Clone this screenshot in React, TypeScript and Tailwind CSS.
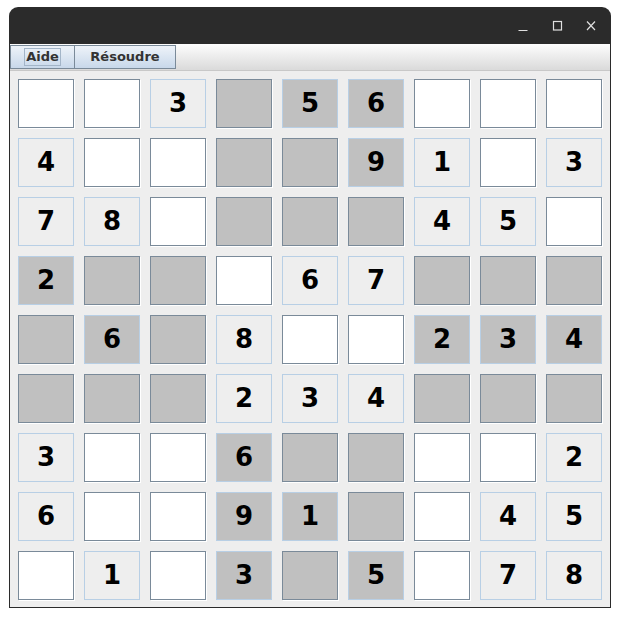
const grid: string[] = [
  "..3#56...",
  "4..##91.3",
  "78.###45.",
  "2##.67###",
  "#6#8..234",
  "###234###",
  "3..6##..2",
  "6..91#.45",
  ".1.3#5.78",
];

// boîtes grisées (damier 3x3)
const shaded = (r: number, c: number) => (Math.floor(r / 3) + Math.floor(c / 3)) % 2 === 1;

function Cell({ ch, dark }: { ch: string; dark: boolean }) {
  const digit = /[0-9]/.test(ch);
  if (!digit) {
    return (
      <div
        className={`border border-[#7a8a99] shadow-[1px_1px_0_#ffffff] ${
          dark ? "bg-[#c0c0c0]" : "bg-white"
        }`}
      />
    );
  }
  return (
    <div
      className={`flex items-center justify-center border border-[#b8cfe5] text-[26px] font-bold text-black ${
        dark ? "bg-[#c0c0c0]" : "bg-[#eeeeee]"
      }`}
    >
      {ch}
    </div>
  );
}

export default function App() {
  return (
    <div
      className="h-[618px] w-[620px] bg-white pl-[9px] pt-[7px]"
      style={{ fontFamily: '"DejaVu Sans", sans-serif' }}
    >
      <div className="flex h-[601px] w-[602px] flex-col overflow-hidden rounded-t-[9px] bg-[#2b2b2b]">
        {/* barre de titre */}
        <div className="flex h-[37px] shrink-0 items-center justify-end gap-[22px] pr-[14px] pt-[1px] text-[#e0e0e0]">
          <svg width="12" height="12" viewBox="0 0 12 12">
            <line x1="1.5" y1="10.5" x2="10.5" y2="10.5" stroke="currentColor" strokeWidth="1.2" />
          </svg>
          <svg width="12" height="12" viewBox="0 0 12 12">
            <rect x="2.5" y="1.5" width="8" height="8.5" fill="none" stroke="currentColor" strokeWidth="1.2" />
          </svg>
          <svg width="12" height="12" viewBox="0 0 12 12">
            <path d="M2 1.5 L10 10 M10 1.5 L2 10" stroke="currentColor" strokeWidth="1.2" />
          </svg>
        </div>
        <div className="mx-px mb-px flex flex-1 flex-col bg-[#eeeeee]">
          {/* barre d'outils */}
          <div className="flex h-[27px] shrink-0 items-start border-b border-[#c8c8c8] bg-gradient-to-b from-[#fdfdfd] to-[#dadada] pt-[1px]">
            <button className="flex h-[24px] w-[65px] items-center justify-center border border-[#7a8a99] bg-gradient-to-b from-[#eef3f9] to-[#c8d8ea] text-[13px] font-bold text-[#333333]">
              <span className="border border-[#a3b5c8] px-px leading-[16px]">Aide</span>
            </button>
            <button className="-ml-px flex h-[24px] w-[102px] items-center justify-center border border-[#7a8a99] bg-gradient-to-b from-[#eef3f9] to-[#c8d8ea] text-[13px] font-bold text-[#333333]">
              Résoudre
            </button>
          </div>
          {/* grille */}
          <div className="grid grid-cols-[repeat(9,56px)] grid-rows-[repeat(9,49px)] gap-[10px] px-[8px] pt-[8px]">
            {grid.map((row, r) =>
              row.split("").map((ch, c) => (
                <Cell key={`${r}-${c}`} ch={ch} dark={shaded(r, c)} />
              ))
            )}
          </div>
        </div>
      </div>
    </div>
  );
}
